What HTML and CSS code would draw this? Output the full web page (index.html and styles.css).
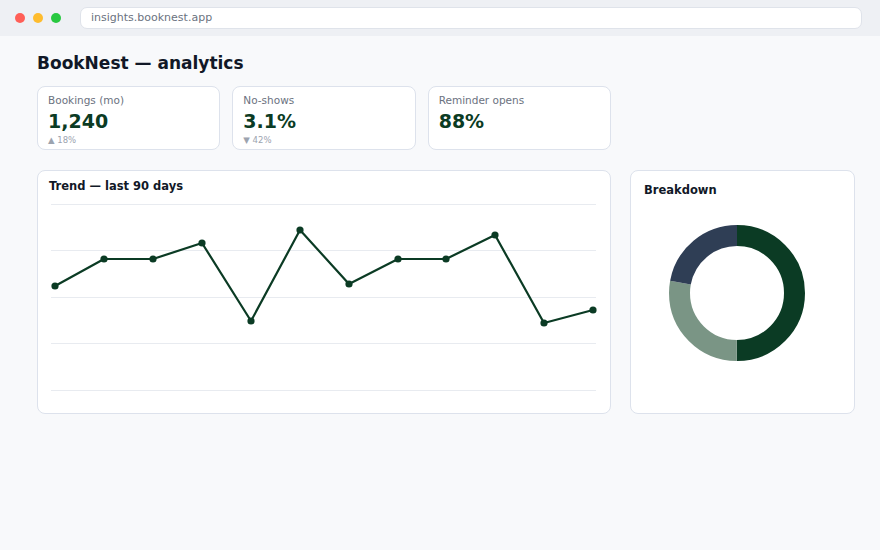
FILE: index.html
```html
<!DOCTYPE html>
<html lang="en">
<head>
    <meta charset="UTF-8">
    <meta name="viewport" content="width=device-width, initial-scale=1.0">
    <title>BookNest — analytics</title>
    <link rel="stylesheet" href="styles.css">
</head>
<body>
    <div class="chrome">
        <span class="dot red"></span>
        <span class="dot yellow"></span>
        <span class="dot green"></span>
        <div class="url">insights.booknest.app</div>
    </div>

    <div class="page">
        <h1>BookNest — analytics</h1>

        <!-- Stat cards -->
        <div class="stats">
            <div class="card stat">
                <div class="stat-label">Bookings (mo)</div>
                <div class="stat-value">1,240</div>
                <div class="stat-sub">▲ 18%</div>
            </div>
            <div class="card stat">
                <div class="stat-label">No-shows</div>
                <div class="stat-value">3.1%</div>
                <div class="stat-sub">▼ 42%</div>
            </div>
            <div class="card stat">
                <div class="stat-label">Reminder opens</div>
                <div class="stat-value">88%</div>
            </div>
        </div>

        <div class="panels">
            <!-- Trend chart -->
            <div class="card trend">
                <h2>Trend — last 90 days</h2>
                <svg class="line-chart" width="548" height="194" viewBox="0 0 548 194">
                    <g stroke="#e8ebf0" stroke-width="1">
                        <line x1="0" y1="4.5" x2="545" y2="4.5" />
                        <line x1="0" y1="50.5" x2="545" y2="50.5" />
                        <line x1="0" y1="97.5" x2="545" y2="97.5" />
                        <line x1="0" y1="143.5" x2="545" y2="143.5" />
                        <line x1="0" y1="190.5" x2="545" y2="190.5" />
                    </g>
                    <polyline fill="none" stroke="#0b3b24" stroke-width="2.2" stroke-linejoin="round"
                        points="4,86 53,59 102,59 151,43 200,121 249,30 298,84 347,59 395,59 444,35 493,123 542,110" />
                    <g fill="#0b3b24">
                        <circle cx="4" cy="86" r="3.6" />
                        <circle cx="53" cy="59" r="3.6" />
                        <circle cx="102" cy="59" r="3.6" />
                        <circle cx="151" cy="43" r="3.6" />
                        <circle cx="200" cy="121" r="3.6" />
                        <circle cx="249" cy="30" r="3.6" />
                        <circle cx="298" cy="84" r="3.6" />
                        <circle cx="347" cy="59" r="3.6" />
                        <circle cx="395" cy="59" r="3.6" />
                        <circle cx="444" cy="35" r="3.6" />
                        <circle cx="493" cy="123" r="3.6" />
                        <circle cx="542" cy="110" r="3.6" />
                    </g>
                </svg>
            </div>

            <!-- Breakdown donut -->
            <div class="card breakdown">
                <h2>Breakdown</h2>
                <svg class="donut" width="140" height="140" viewBox="0 0 140 140">
                    <g transform="rotate(-90 70 70)" fill="none" stroke-width="21">
                        <circle cx="70" cy="70" r="57.5" stroke="#0b3b24"
                            stroke-dasharray="180.64 361.28" />
                        <circle cx="70" cy="70" r="57.5" stroke="#7a9585"
                            stroke-dasharray="0 180.64 100.36 361.28" />
                        <circle cx="70" cy="70" r="57.5" stroke="#2f3e55"
                            stroke-dasharray="0 281 80.28 361.28" />
                    </g>
                </svg>
            </div>
        </div>
    </div>
</body>
</html>
```

FILE: styles.css
```css
body {
    margin: 0;
    background-color: #f8f9fb;
    font-family: "DejaVu Sans", Verdana, sans-serif;
    color: #111827;
}
.chrome {
    height: 36px;
    background-color: #eef0f4;
    display: flex;
    align-items: center;
    padding: 0 18px 0 15px;
}
.dot {
    width: 10px;
    height: 10px;
    border-radius: 50%;
    margin-right: 8px;
}
.dot.red {
    background-color: #ff5f57;
}
.dot.yellow {
    background-color: #febc2e;
}
.dot.green {
    background-color: #28c840;
}
.url {
    flex: 1;
    margin-left: 11px;
    height: 20px;
    line-height: 20px;
    background-color: #fff;
    border: 1px solid #dfe3ea;
    border-radius: 7px;
    padding: 0 10px;
    font-size: 11px;
    color: #6b7280;
}
.page {
    padding: 15px 25px 0 37px;
}
h1 {
    margin: 0 0 11px;
    font-size: 17px;
    line-height: 24px;
    font-weight: bold;
}
.card {
    background-color: #fff;
    border: 1px solid #dde2ec;
    border-radius: 8px;
    box-sizing: border-box;
}
.stats {
    width: 574px;
    display: grid;
    grid-template-columns: repeat(3, 1fr);
    gap: 12px;
}
.stat {
    height: 64px;
    padding: 6px 10px 3px;
}
.stat-label {
    font-size: 10.5px;
    line-height: 14px;
    color: #6b7280;
}
.stat-value {
    font-size: 19px;
    line-height: 28px;
    font-weight: bold;
    color: #0b3b24;
}
.stat-sub {
    font-size: 8.5px;
    line-height: 10px;
    color: #9ca3af;
}
.panels {
    margin-top: 20px;
    display: grid;
    grid-template-columns: 574px 1fr;
    gap: 19px;
}
.panels h2 {
    margin: 0;
    font-size: 11.5px;
    line-height: 16px;
    font-weight: bold;
}
.trend {
    height: 244px;
    padding: 7px 12px 0 11px;
}
.line-chart {
    display: block;
    margin: 6px 0 0 2px;
}
.breakdown {
    height: 244px;
    padding: 11px 14px 0 13px;
}
.donut {
    display: block;
    margin: 25px 0 0 23px;
}
```
